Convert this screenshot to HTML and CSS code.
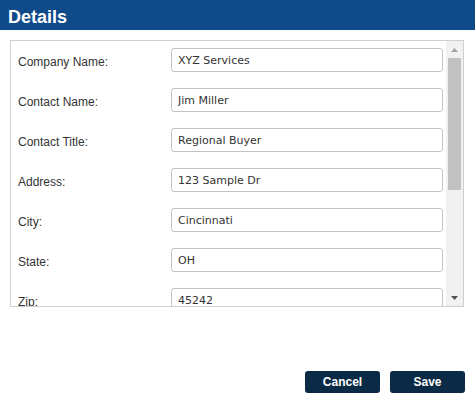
FILE: index.html
```html
<!DOCTYPE html>
<html>
<head>
<meta charset="utf-8">
<link rel="stylesheet" href="styles.css">
</head>
<body>
<div class="header">Details</div>
<div class="scrollbox">
  <div class="form">
    <label class="lbl">Company Name:</label><input class="inp" type="text" value="XYZ Services">
    <label class="lbl">Contact Name:</label><input class="inp" type="text" value="Jim Miller">
    <label class="lbl">Contact Title:</label><input class="inp" type="text" value="Regional Buyer">
    <label class="lbl">Address:</label><input class="inp" type="text" value="123 Sample Dr">
    <label class="lbl">City:</label><input class="inp" type="text" value="Cincinnati">
    <label class="lbl">State:</label><input class="inp" type="text" value="OH">
    <label class="lbl">Zip:</label><input class="inp" type="text" value="45242">
  </div>
  <div class="sbar">
    <div class="sbtn"><svg width="7" height="4" viewBox="0 0 7 4"><polygon points="3.5,0 7,4 0,4" fill="#a3a3a3"/></svg></div>
    <div class="strack"><div class="sthumb"></div></div>
    <div class="sbtn"><svg width="7" height="4" viewBox="0 0 7 4"><polygon points="0,0 7,0 3.5,4" fill="#505050"/></svg></div>
  </div>
</div>
<div class="footer">
  <button class="btn">Cancel</button>
  <button class="btn">Save</button>
</div>
</body>
</html>
```
FILE: styles.css
```css
html, body {
  margin: 0;
  padding: 0;
  background: #ffffff;
  font-family: "Liberation Sans", Arial, sans-serif;
}
.header {
  height: 30px;
  box-sizing: border-box;
  padding: 4px 0 0 8px;
  line-height: 26px;
  background: #0f4a8b;
  color: #ffffff;
  font-weight: bold;
  font-size: 18px;
}
.scrollbox {
  margin: 10px 11px 0 10px;
  height: 267px;
  box-sizing: border-box;
  border: 1px solid #cfcfcf;
  display: flex;
}
.form {
  flex: 1;
  overflow: hidden;
  display: grid;
  grid-template-columns: 153px 272px;
  grid-auto-rows: 24px;
  row-gap: 16px;
  align-content: start;
  padding: 7px 0 0 7px;
}
.sbar {
  width: 17px;
  background: #f1f1f1;
  display: flex;
  flex-direction: column;
}
.sbtn {
  height: 17px;
  display: flex;
  align-items: center;
  justify-content: center;
}
.strack {
  flex: 1;
  padding: 0 2px;
}
.sthumb {
  height: 132px;
  background: #c1c1c1;
}
.lbl {
  font-size: 12px;
  color: #333333;
  line-height: 24px;
  padding-top: 2px;
}
.inp {
  box-sizing: border-box;
  width: 272px;
  height: 24px;
  margin: 0;
  border: 1px solid #c3c3c3;
  border-radius: 3px;
  padding: 0 6px;
  font-family: "DejaVu Sans", Verdana, sans-serif;
  font-size: 11px;
  color: #333333;
  outline: none;
}
.footer {
  display: flex;
  justify-content: flex-end;
  gap: 10px;
  padding: 64px 10px 0 0;
}
.btn {
  width: 75px;
  height: 22px;
  border: none;
  border-radius: 3px;
  background: #0a2a45;
  color: #ffffff;
  font-family: "Liberation Sans", Arial, sans-serif;
  font-weight: bold;
  font-size: 12px;
  padding: 0;
}
```
